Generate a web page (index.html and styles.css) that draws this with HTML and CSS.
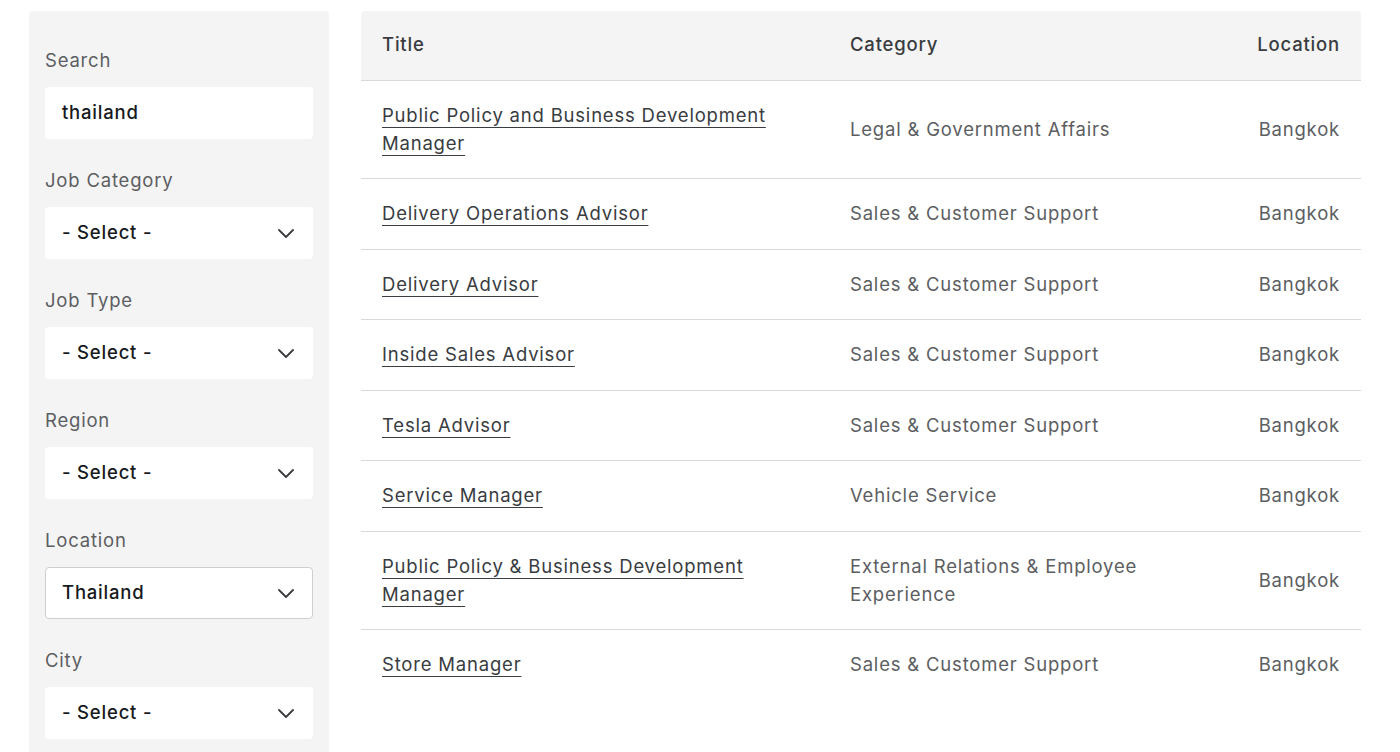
FILE: index.html
```html
<!DOCTYPE html>
<html lang="en">
<head>
<meta charset="utf-8">
<title>Careers</title>
<link rel="stylesheet" href="styles.css">
</head>
<body>
<div class="page">
  <aside class="filters">
    <div class="field">
      <label class="label">Search</label>
      <div class="control">thailand</div>
    </div>
    <div class="field">
      <label class="label">Job Category</label>
      <div class="control select"><span>- Select -</span><svg class="chev" viewBox="0 0 16 9"><path d="M1 1l7 7 7-7"/></svg></div>
    </div>
    <div class="field">
      <label class="label">Job Type</label>
      <div class="control select"><span>- Select -</span><svg class="chev" viewBox="0 0 16 9"><path d="M1 1l7 7 7-7"/></svg></div>
    </div>
    <div class="field">
      <label class="label">Region</label>
      <div class="control select"><span>- Select -</span><svg class="chev" viewBox="0 0 16 9"><path d="M1 1l7 7 7-7"/></svg></div>
    </div>
    <div class="field">
      <label class="label">Location</label>
      <div class="control select bordered"><span>Thailand</span><svg class="chev" viewBox="0 0 16 9"><path d="M1 1l7 7 7-7"/></svg></div>
    </div>
    <div class="field">
      <label class="label">City</label>
      <div class="control select"><span>- Select -</span><svg class="chev" viewBox="0 0 16 9"><path d="M1 1l7 7 7-7"/></svg></div>
    </div>
  </aside>
  <main class="results">
    <table class="jobs">
      <thead>
        <tr><th class="c-title">Title</th><th class="c-cat">Category</th><th class="c-loc">Location</th></tr>
      </thead>
      <tbody>
        <tr><td><a href="#">Public Policy and Business Development Manager</a></td><td>Legal &amp; Government Affairs</td><td class="c-loc">Bangkok</td></tr>
        <tr><td><a href="#">Delivery Operations Advisor</a></td><td>Sales &amp; Customer Support</td><td class="c-loc">Bangkok</td></tr>
        <tr><td><a href="#">Delivery Advisor</a></td><td>Sales &amp; Customer Support</td><td class="c-loc">Bangkok</td></tr>
        <tr><td><a href="#">Inside Sales Advisor</a></td><td>Sales &amp; Customer Support</td><td class="c-loc">Bangkok</td></tr>
        <tr><td><a href="#">Tesla Advisor</a></td><td>Sales &amp; Customer Support</td><td class="c-loc">Bangkok</td></tr>
        <tr><td><a href="#">Service Manager</a></td><td>Vehicle Service</td><td class="c-loc">Bangkok</td></tr>
        <tr><td><a href="#">Public Policy &amp; Business Development Manager</a></td><td>External Relations &amp; Employee Experience</td><td class="c-loc">Bangkok</td></tr>
        <tr class="last"><td><a href="#">Store Manager</a></td><td>Sales &amp; Customer Support</td><td class="c-loc">Bangkok</td></tr>
      </tbody>
    </table>
  </main>
</div>
</body>
</html>
```

FILE: styles.css
```css
* { box-sizing: border-box; }
html, body { margin: 0; padding: 0; background: #fff; }
body {
  font-family: Inter, "Liberation Sans", sans-serif;
  font-size: 18.5px;
  color: #5c5e62;
  overflow: hidden;
  height: 752px;
  letter-spacing: 0.8px;
}
.page {
  display: flex;
  align-items: flex-start;
  gap: 32px;
  padding: 11px 40px 0 29px;
}
.filters {
  width: 300px;
  flex: none;
  background: #f4f4f4;
  border-radius: 4px;
  padding: 37px 16px 40px;
  display: flex;
  flex-direction: column;
  gap: 29px;
  min-height: 800px;
}
.field { display: flex; flex-direction: column; gap: 15px; }
.label {
  display: block;
  line-height: 24px;
  color: #5c5e62;
}
.control {
  height: 52px;
  background: #fff;
  border-radius: 4px;
  padding: 0 19px 2px 17px;
  display: flex;
  align-items: center;
  justify-content: space-between;
  font-weight: 500;
  color: #171a20;
}
.control.bordered { border: 1px solid #cfcfcf; padding-left: 16px; padding-right: 18px; }
.chev { width: 16px; height: 9px; flex: none; margin-top: 2px; }
.chev path { fill: none; stroke: #393c41; stroke-width: 1.8; stroke-linecap: round; stroke-linejoin: round; }
.results { flex: 1; min-width: 0; }
.jobs {
  width: 1000px;
  border-collapse: collapse;
  table-layout: fixed;
}
.jobs th {
  background: #f4f4f4;
  text-align: left;
  font-weight: 500;
  color: #393c41;
  height: 69px;
  padding: 0 21px 2px;
  line-height: 28px;
  border-bottom: 1px solid #d9d9d9;
}
.jobs th:first-child { border-top-left-radius: 4px; }
.jobs th:last-child { border-top-right-radius: 4px; }
.jobs .c-title { width: 468px; }
.jobs .c-cat { width: 406px; }
.jobs .c-loc { text-align: right; }
.jobs td {
  padding: 20px 21px 21.5px;
  line-height: 28px;
  vertical-align: middle;
  border-bottom: 1px solid #d9d9d9;
}
.jobs tr.last td { border-bottom: none; }
.jobs a {
  color: #393c41;
  text-decoration: underline;
  text-decoration-thickness: 1px;
  text-underline-offset: 5px;
}
```
